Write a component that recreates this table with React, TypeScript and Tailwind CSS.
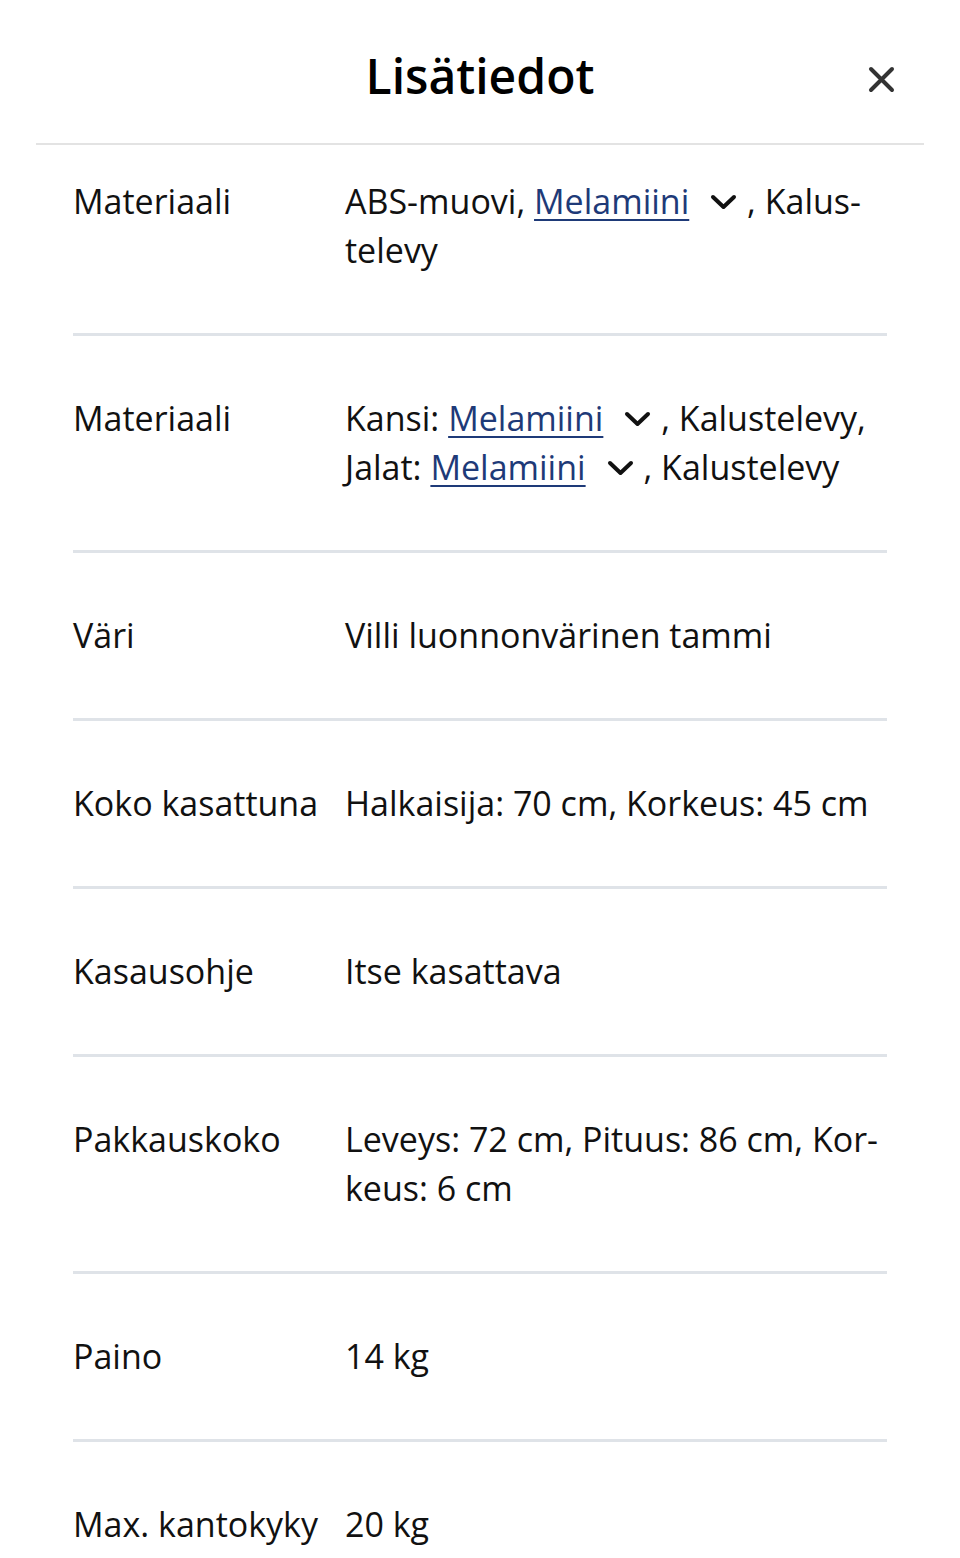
import React from "react";

const Chevron = () => (
  <span className="inline-flex items-center align-middle ml-[21px] mr-[1px] -mt-[6px]">
    <svg width="27" height="16" viewBox="0 0 27 16" fill="none">
      <path d="M3 3 L13.5 13 L24 3" stroke="#111" strokeWidth="4" strokeLinecap="round" strokeLinejoin="round" />
    </svg>
  </span>
);

const Link = ({ children }: { children: React.ReactNode }) => (
  <a className="text-[#1e3a78] underline decoration-2 underline-offset-[5px]" href="#">
    {children}
  </a>
);

type Row = { label: string; value: React.ReactNode; first?: boolean };

const rows: Row[] = [
  {
    label: "Materiaali",
    value: (
      <>
        ABS-muovi, <Link>Melamiini</Link>
        <Chevron /> , Kalus-
        <br />
        televy
      </>
    ),
    first: true,
  },
  {
    label: "Materiaali",
    value: (
      <>
        Kansi: <Link>Melamiini</Link>
        <Chevron /> , Kalustelevy,
        <br />
        Jalat: <Link>Melamiini</Link>
        <Chevron /> , Kalustelevy
      </>
    ),
  },
  { label: "Väri", value: "Villi luonnonvärinen tammi" },
  { label: "Koko kasattuna", value: "Halkaisija: 70 cm, Korkeus: 45 cm" },
  { label: "Kasausohje", value: "Itse kasattava" },
  {
    label: "Pakkauskoko",
    value: (
      <>
        Leveys: 72 cm, Pituus: 86 cm, Kor-
        <br />
        keus: 6 cm
      </>
    ),
  },
  { label: "Paino", value: "14 kg" },
  { label: "Max. kantokyky", value: "20 kg" },
];

export default function App() {
  return (
    <div
      className="w-[960px] h-[1558px] overflow-hidden bg-white text-[#111]"
      style={{ fontFamily: '"Open Sans", "Noto Sans", sans-serif' }}
    >
      <div className="px-[36px]">
        <div className="relative flex h-[145px] items-center justify-center border-b-2 border-[#e3e3e3] pt-[8px]">
          <h1 className="text-[48px] font-semibold leading-none text-black">Lisätiedot</h1>
          <button className="absolute right-[29px] top-[66px] flex h-[27px] w-[27px] items-center justify-center">
            <svg width="27" height="27" viewBox="0 0 27 27" fill="none">
              <path d="M3 3 L24 24 M24 3 L3 24" stroke="#333" strokeWidth="4" strokeLinecap="round" />
            </svg>
          </button>
        </div>
      </div>
      <div className="px-[73px]">
        {rows.map((r, i) => (
          <div
            key={i}
            className={`flex border-b-[3px] border-[#dfe3e8] text-[34px] leading-[49px] ${
              r.first ? "pt-[32px] pb-[58px]" : "py-[58px]"
            }`}
          >
            <div className="w-[272px] shrink-0">{r.label}</div>
            <div className="flex-1">{r.value}</div>
          </div>
        ))}
      </div>
    </div>
  );
}
